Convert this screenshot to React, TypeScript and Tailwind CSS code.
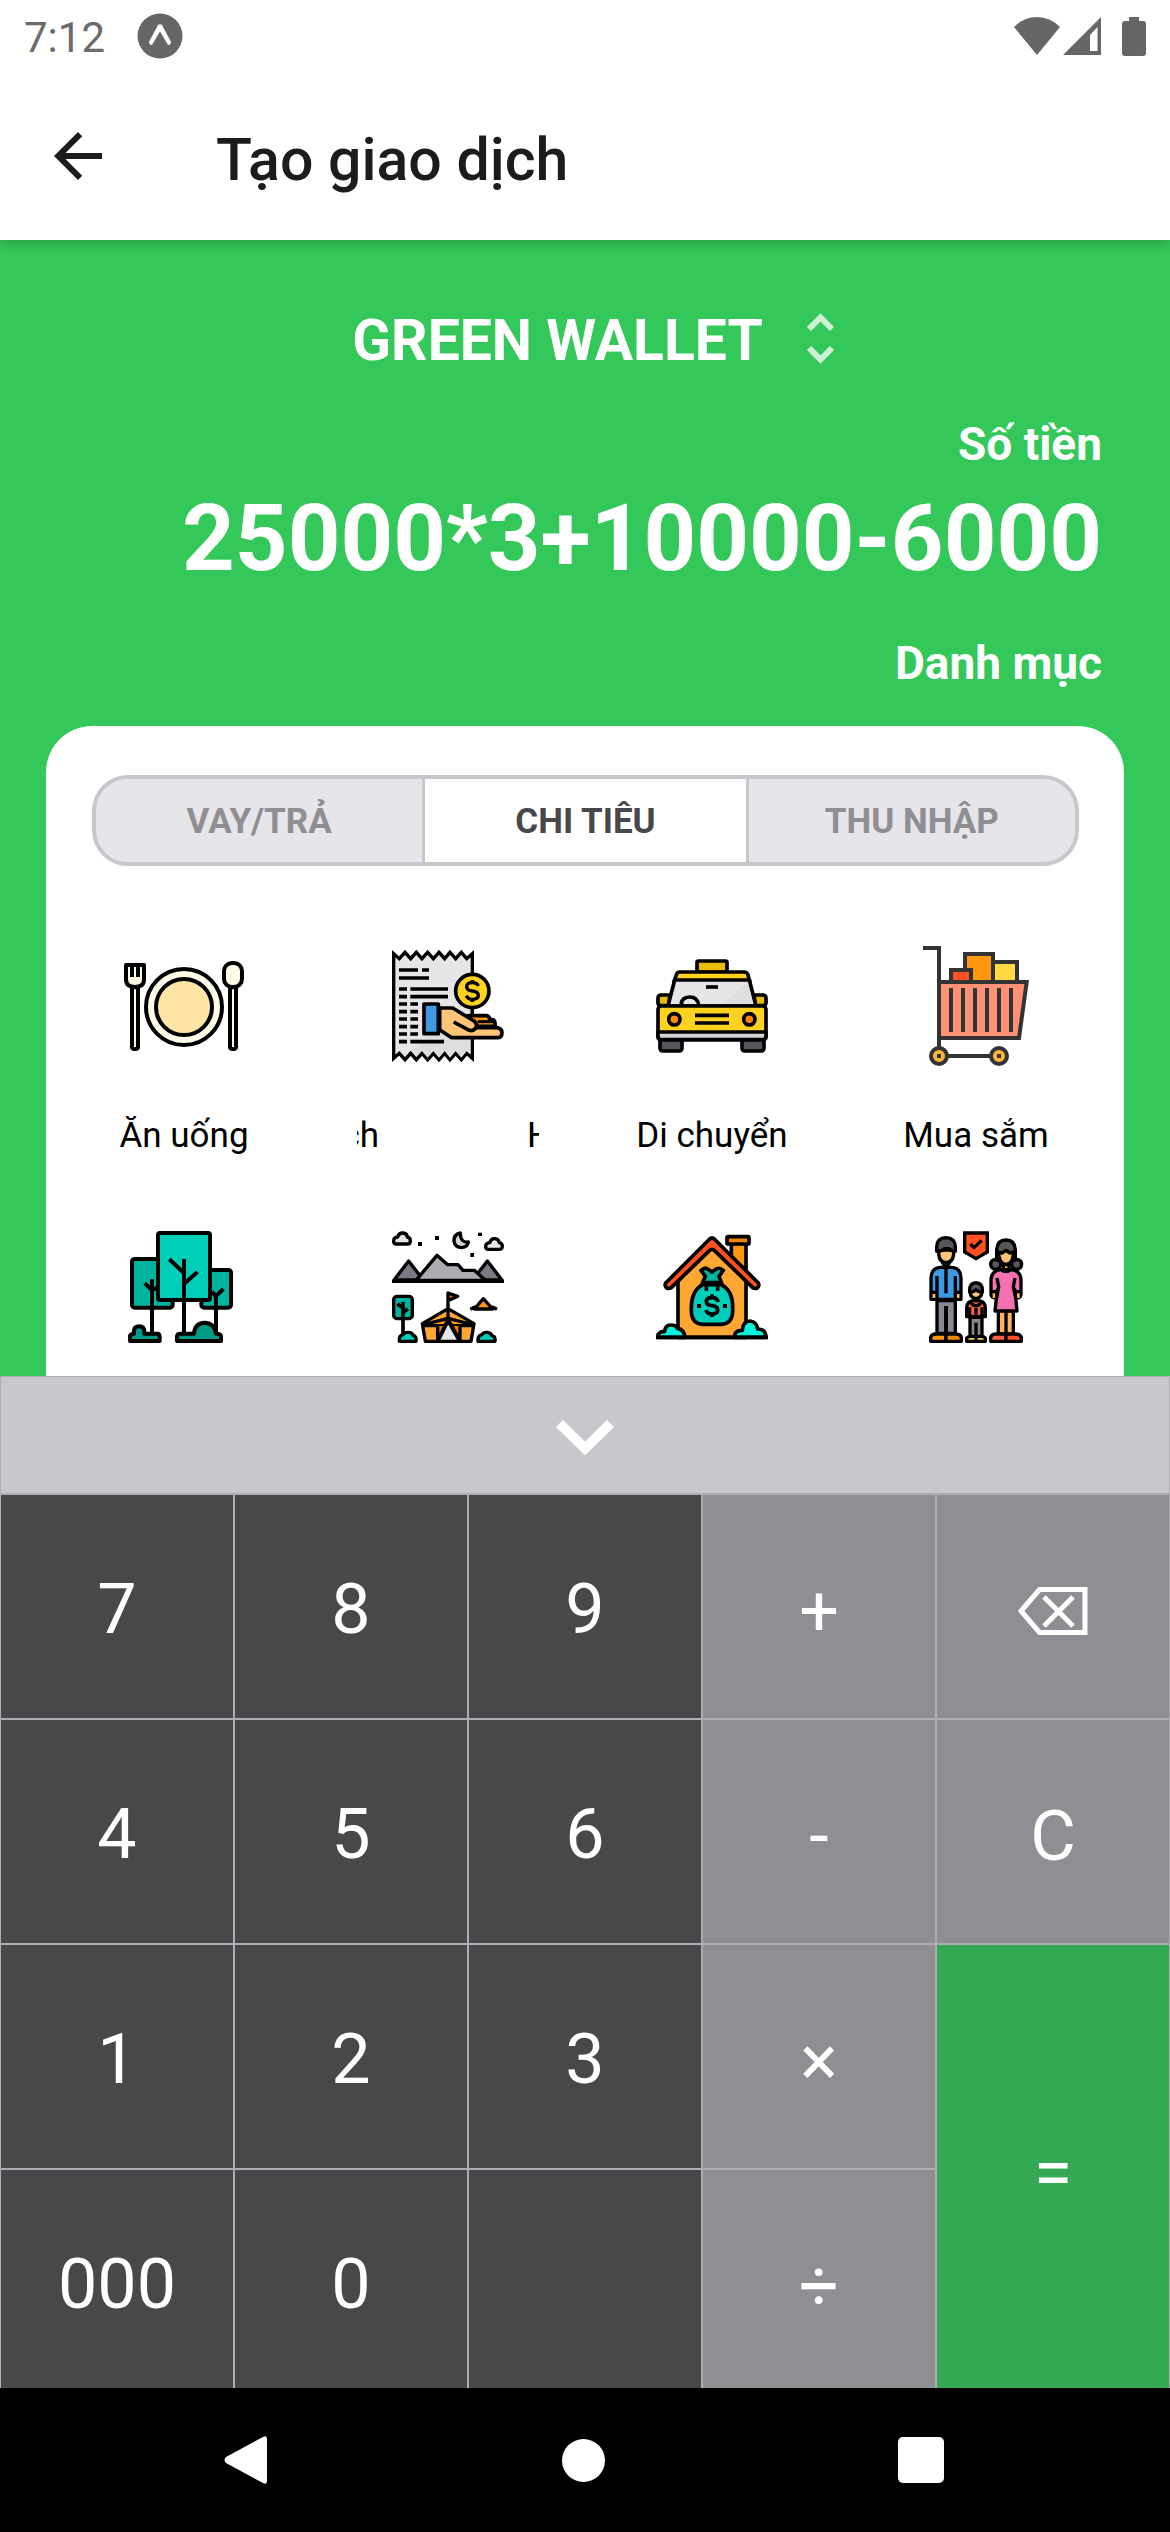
import React from "react";

const outline = {
  stroke: "#000",
  strokeWidth: 12,
  strokeLinejoin: "round" as const,
  strokeLinecap: "butt" as const,
};

function DiningIcon() {
  return (
    <svg viewBox="42 48 360 360" className="size-[120px]" aria-hidden="true">
      <g {...outline}>
        <path d="M66 172V350Q66 357 75 357Q84 357 84 350V172Z" fill="#fffde7" />
        <path d="M48 105H102V148Q102 171 75 171Q48 171 48 148Z" fill="#fffde7" />
        <path d="M66 100V141M84 100V141" fill="none" />
        <path d="M360 172V350Q360 357 369 357Q378 357 378 350V172Z" fill="#fffde7" />
        <rect x="342" y="99" width="54" height="72" rx="24" fill="#fffde7" />
        <circle cx="222" cy="231" r="114" fill="#fffde7" />
        <circle cx="222" cy="231" r="84" fill="#ffe6a7" />
      </g>
    </svg>
  );
}

function BillIcon() {
  return (
    <svg viewBox="144 48 360 360" className="size-[120px]" aria-hidden="true">
      <g {...outline} strokeLinejoin="miter" strokeWidth={10}>
        <path
          d="M161 71L178 86L195 67L212 86L229 67L246 86L263 67L280 86L297 67L314 86L330 67L347 86L364 67L380 86L397 71V385L380 370L364 389L347 370L330 389L314 370L297 389L280 370L263 389L246 370L229 389L212 370L195 389L178 370L161 385Z"
          fill="#e6e6e9"
        />
      </g>
      <path d="M318 260L220 364L229 376L246 363L263 383L280 363L297 383L314 363L330 383L347 363L364 383L380 363L391 372V300Z" fill="#dedee1" />
      <path
        d="M177 120H234M246 120H267M177 144H267M177 177H201M211 177H324M177 200H201M211 200H324M177 222H201M211 222H234M177 245H201M211 245H234M177 267H201M211 267H234M177 290H201M211 290H234M177 312H201M211 312H234M177 335H201M211 335H312"
        stroke="#000"
        strokeWidth="11"
      />
      <path d="M397 230V262" stroke="#000" strokeWidth="10" />
      <g {...outline} strokeWidth={11}>
        <circle cx="397" cy="183" r="50" fill="#ffd21f" />
        <path d="M384 257H441Q449 259 449 269H459Q467 274 465 289H408Z" fill="#ff9811" />
        <path
          d="M299 234H338L402 273Q414 283 408 293H471Q486 296 486 308Q486 323 471 323H335L299 299Z"
          fill="#ffc477"
        />
        <path d="M341 276L388 301Q403 305 410 289" fill="none" />
        <path d="M413 275H465" fill="none" strokeWidth={9} />
        <rect x="252" y="222" width="43" height="89" fill="#3d9ae2" />
      </g>
      <path
        d="M415 168Q411 158 397 158Q380 158 380 170Q380 181 397 183Q415 185 415 196Q415 208 397 208Q383 208 379 197M397 150V160M397 206V216"
        fill="none"
        stroke="#000"
        strokeWidth="10"
      />
    </svg>
  );
}

function TaxiIcon() {
  return (
    <svg viewBox="96 48 360 360" className="size-[120px]" aria-hidden="true">
      <g {...outline} strokeWidth={11}>
        <rect x="231" y="93" width="90" height="34" rx="4" fill="#e8bc00" />
        <path d="M150 195H122Q114 196 114 204V220Q115 227 124 227H146ZM402 195H430Q438 196 438 204V220Q437 227 428 227H406Z" fill="#e8bc00" />
        <rect x="120" y="325" width="66" height="38" rx="8" fill="#57565c" />
        <rect x="366" y="325" width="66" height="38" rx="8" fill="#57565c" />
        <path d="M162 155L170 132Q172 126 180 126H372Q380 126 383 132L390 155Z" fill="#ffd21f" />
        <path d="M164 150H388L408 228H144Z" fill="#e6e6e9" />
        <path d="M382 156L310 222H398L383 156Z" fill="#dedee1" stroke="none" />
        <path d="M183 226Q184 201 209 201Q233 201 236 226" fill="none" />
        <path d="M258 171H294" fill="none" />
        <rect x="114" y="228" width="324" height="101" rx="10" fill="#ffd21f" />
        <path d="M114 306H438V319Q438 329 428 329H124Q114 329 114 319Z" fill="#d5d3da" />
        <path d="M225 256H327M225 279H327" fill="none" />
        <circle cx="163" cy="268" r="17" fill="#ff8a00" />
        <circle cx="388" cy="268" r="17" fill="#ff8a00" />
      </g>
    </svg>
  );
}

function CartIcon() {
  return (
    <svg viewBox="108 48 360 360" className="size-[120px]" aria-hidden="true">
      <g stroke="#333" strokeWidth="12">
        <rect x="255" y="72" width="84" height="84" fill="#ff9811" />
        <rect x="339" y="96" width="72" height="60" fill="#ffda44" />
        <rect x="213" y="120" width="60" height="36" fill="#ff5023" />
        <path d="M177 156H440L417 324H177Z" fill="#ff9176" />
        <path d="M129 54H177V350M213 174V306M249 174V306M285 174V306M321 174V306M357 174V306M393 174V306M200 378H334" fill="none" />
        <circle cx="177" cy="378" r="24" fill="#ffb33e" />
        <circle cx="357" cy="378" r="24" fill="#ffb33e" />
      </g>
      <path d="M171 372h12v12h-12zM351 372h12v12h-12z" fill="#333" />
    </svg>
  );
}

function ParkIcon() {
  return (
    <svg viewBox="42 51 360 360" className="size-[120px]" aria-hidden="true">
      <g {...outline}>
        <rect x="66" y="147" width="122" height="146" rx="8" fill="#00b59f" />
        <rect x="274" y="180" width="89" height="113" rx="8" fill="#00b59f" />
        <path d="M126 208V371M104 220L126 240L146 232M318 252V368M306 246L318 258L340 237" fill="none" />
        <rect x="144" y="69" width="156" height="201" rx="6" fill="#00ceb8" />
        <path d="M222 147V372M178 148L222 189M262 186L222 222" fill="none" />
        <path d="M60 393V377Q62 372 72 371V362Q73 349 88 349Q102 350 103 362V371H144Q149 373 149 382V393Z" fill="#009b87" />
        <path d="M201 393V379Q202 371 210 371H252Q254 339 284 338Q314 339 318 371Q333 371 333 379V393Z" fill="#009b87" />
      </g>
    </svg>
  );
}

function CampIcon() {
  return (
    <svg viewBox="54 51 360 360" className="size-[120px]" aria-hidden="true">
      <g {...outline} strokeWidth={10}>
        <path d="M76 102Q70 100 71 91Q72 82 83 81Q87 68 99 69Q111 70 112 81Q121 83 121 92Q121 102 113 102Z" fill="#e6e6e9" />
        <path d="M353 118Q346 116 347 108Q348 99 359 98Q363 85 375 86Q386 87 388 98Q397 100 397 108Q397 117 389 118Z" fill="#e6e6e9" />
        <path d="M271 69Q251 73 252 94Q255 113 275 113Q293 111 295 96Q271 99 271 69Z" fill="#d5d3da" />
        <path d="M72 210L116 153L160 210Z" fill="#7a7882" />
        <path d="M308 210L352 153L396 210Z" fill="#7a7882" />
        <path d="M138 211L201 136L233 164H264L279 181H313L346 211Z" fill="#acabb1" />
        <path d="M66 214H402" fill="none" />
        <rect x="71" y="259" width="56" height="67" rx="10" fill="#00b59f" />
        <path d="M99 276V374M82 282L99 294M114 297L99 307" fill="none" strokeWidth={11} />
        <path d="M88 394Q86 377 99 374Q103 366 116 367Q127 367 130 377Q140 379 138 394Z" fill="#00ceb8" />
        <path d="M324 394Q322 377 336 374Q340 366 352 367Q363 368 366 377Q377 379 375 394Z" fill="#00ceb8" />
        <path d="M234 295V249L263 259L234 272" fill="#ff5023" />
        <path d="M157 341L234 296L312 341L303 394H166Z" fill="#ffa733" />
        <path d="M157 345L234 325L312 345M158 347H312" fill="#ff9811" />
        <path d="M203 348V392L234 328L270 392V348" fill="#e87f00" />
        <path d="M204 394L234 333L269 394Z" fill="#e6e6e9" />
        <path d="M234 296V332" fill="none" />
        <path d="M313 297L340 266L368 297Z" fill="#ff9811" />
        <path d="M301 298L316 290M366 290L381 298" fill="none" />
      </g>
      <path d="M144 96h12v12h-12zM195 78h12v12h-12zM324 68h12v10h-12zM301 129h11v12h-11z" fill="#000" />
    </svg>
  );
}

function HouseIcon() {
  return (
    <svg viewBox="96 51 360 360" className="size-[120px]" aria-hidden="true">
      <g {...outline} strokeWidth={11}>
        <path d="M334 100H378V195L334 150Z" fill="#ff9811" />
        <rect x="321" y="80" width="66" height="22" rx="4" fill="#ee8700" />
        <path d="M174 204L276 110L378 204V382H174Z" fill="#ffa733" />
        <path d="M269 87Q276 81 283 87L415 219Q419 227 413 233Q406 238 398 233L283 121Q276 116 269 121L154 233Q146 238 139 233Q133 227 137 219Z" fill="#ff5023" />
        <path d="M247 220L256 199L243 181Q256 170 263 177L276 186L288 177Q298 171 310 181L297 199L305 220Z" fill="#00b59f" />
        <path d="M248 224H304Q338 242 338 290V306Q336 341 304 343H248Q216 341 214 306V290Q215 242 248 224Z" fill="#00ceb8" />
        <path d="M246 218H308M259 222V242M293 222V242" fill="none" />
        <path d="M114 382V374Q120 364 134 364Q136 344 154 345Q168 345 172 355Q192 358 195 382Z" fill="#00f5dc" />
        <path d="M345 382V372Q350 360 367 361Q369 333 390 333Q410 335 413 357Q437 357 438 382Z" fill="#00f5dc" />
        <path d="M108 382H444" fill="none" />
        <path d="M294 276Q292 263 276 263Q259 263 259 274Q259 286 276 287Q293 289 293 300Q293 312 276 312Q261 312 258 300M276 253V264M276 311V321" fill="none" />
      </g>
      <path d="M231 282h12v12h-12zM309 282h12v12h-12z" fill="#000" />
    </svg>
  );
}

function FamilyIcon() {
  return (
    <svg viewBox="108 51 360 360" className="size-[120px]" aria-hidden="true">
      <g {...outline} strokeWidth={10}>
        <path d="M254 69H322V126L288 146L254 126Z" fill="#ff5023" strokeLinejoin="miter" />
        <path d="M271 102L282 113L305 91" fill="none" />

        <path d="M171 272H226V370H171Z" fill="#8b8892" />
        <path d="M198 288V372" fill="none" strokeWidth={12} />
        <path d="M153 268V204Q154 173 182 172H214Q242 173 243 204V268Z" fill="#3d9ae2" />
        <path d="M158 252H168V264H158ZM228 252H238V264H228Z" fill="#ffb35a" stroke="none" />
        <path d="M171 198V268M226 198V268M198 174V250M153 247H170M226 247H243" fill="none" />
        <path d="M188 158L198 174L209 158Z" fill="#ffc477" />
        <path d="M176 120V132Q178 157 198 158Q219 157 221 132V120Z" fill="#ffc477" />
        <path d="M170 124V110Q171 84 198 83Q225 84 226 110V124Q214 124 207 116H202L198 119L194 116L188 120Q182 124 170 124Z" fill="#57565c" />
        <path d="M152 394V382Q154 372 168 372H198V394Z" fill="#ff9811" />
        <path d="M198 394V372H228Q242 373 244 382V394Z" fill="#ee8700" />

        <path d="M270 322H306V382H270Z" fill="#8b8892" />
        <path d="M288 338V380" fill="none" />
        <path d="M260 320V292Q262 273 280 272H296Q314 273 316 292V320Z" fill="#ff6243" />
        <path d="M269 292V320M306 292V320M288 294V314M271 276Q288 299 305 276" fill="none" />
        <path d="M270 236V247Q272 264 288 265Q304 264 306 247V236Z" fill="#ffc477" />
        <path d="M269 246V238Q270 219 288 218Q306 219 307 238V246Q296 248 288 239Q280 248 269 246Z" fill="#57565c" />
        <path d="M260 394V384Q264 379 274 379H288V394ZM288 394V379H302Q313 379 316 384V394Z" fill="#ffda44" />

        <path d="M355 302H378V372H355ZM378 302H400V372H378Z" fill="#ffb35a" />
        <circle cx="347" cy="163" r="15" fill="#57565c" />
        <circle cx="410" cy="163" r="15" fill="#57565c" />
        <path d="M350 150V118Q352 90 378 90Q404 90 406 118V150Z" fill="#57565c" />
        <path d="M356 126L366 129L378 121L390 129L400 126Q401 161 378 163Q356 161 356 126Z" fill="#ffc477" />
        <path d="M370 164H387V179H370Z" fill="#ffb35a" />
        <path d="M363 179Q378 190 393 179Q422 182 423 210V254Q421 265 411 263L405 240L411 303H345L352 240L346 263Q335 265 333 254V210Q334 182 363 179Z" fill="#f271ae" />
        <path d="M338 250H346V264H338ZM411 250H419V264H411Z" fill="#ffb35a" stroke="none" />
        <path d="M351 204L356 230L350 264M405 204L400 230L407 264M333 245H352M405 245H423" fill="none" />
        <path d="M332 394V382Q335 372 348 372H378V394Z" fill="#ff6243" />
        <path d="M378 394V372H408Q421 373 424 382V394Z" fill="#ff5023" />
      </g>
    </svg>
  );
}

function StatusBar() {
  return (
    <div className="flex h-[72px] items-center justify-between px-6 text-[#6b6b6b]">
      <div className="flex items-center gap-8">
        <span className="pt-1 text-[42px] leading-[48px]">7:12</span>
        <svg viewBox="0 0 46 46" className="size-[46px]" aria-hidden="true">
          <circle cx="23" cy="23" r="22.5" fill="#666" />
          <path
            d="M21 12Q23 10.500 25 12L34 29Q34 32 31 32L23 18.500L15 32Q12 32 12 29Z"
            fill="#fff"
          />
        </svg>
      </div>
      <div className="flex items-center text-[#666]">
        <svg viewBox="0 0 46 38" className="h-[38px] w-[46px]" fill="currentColor" aria-hidden="true">
          <path d="M0 10Q10 0 23 0Q36 0 46 10L23 38Z" />
        </svg>
        <svg viewBox="0 0 38 38" className="ml-[3px] h-[38px] w-[38px]" fill="currentColor" aria-hidden="true">
          <path fillRule="evenodd" d="M38 0V38H0ZM34.500 10L27 18V34H34.500Z" />
        </svg>
        <svg viewBox="0 0 24 39" className="ml-[21px] h-[39px] w-6" fill="currentColor" aria-hidden="true">
          <path d="M7 0H17V4H21Q24 4 24 7V36Q24 39 21 39H3Q0 39 0 36V7Q0 4 3 4H7Z" />
        </svg>
      </div>
    </div>
  );
}

function Header() {
  return (
    <header className="relative z-10 flex-none bg-white shadow-[0_2px_12px_rgba(0,0,0,0.25)]">
      <StatusBar />
      <div className="flex h-[168px] items-center pt-2">
        <button type="button" aria-label="Quay lại" className="mb-2 ml-[54px] text-[#1c1c1e]">
          <svg viewBox="4 4 16 16" className="size-12" fill="currentColor" aria-hidden="true">
            <path d="M20 11H7.830l5.590-5.590L12 4l-8 8 8 8 1.410-1.410L7.830 13H20v-2z" />
          </svg>
        </button>
        <h1 className="ml-[114px] text-[59px] font-medium leading-[72px] text-[#1c1c1e]">Tạo giao dịch</h1>
      </div>
    </header>
  );
}

const tabs = ["VAY/TRẢ", "CHI TIÊU", "THU NHẬP"];

function Tabs() {
  return (
    <div
      role="tablist"
      className="ml-[46px] mr-[45px] grid h-[91px] grid-cols-3 overflow-hidden rounded-[36px] border-4 border-[#c7c7cc] bg-[#e5e5ea] text-[35px] font-bold text-[#8e8e93]"
    >
      {tabs.map((tab, i) => (
        <button
          key={tab}
          type="button"
          role="tab"
          aria-selected={i === 1}
          className={
            i === 1 ? "border-x-[3px] border-[#c7c7cc] bg-white pt-1 text-[#48484a]" : "pt-1"
          }
        >
          {tab}
        </button>
      ))}
    </div>
  );
}

function ScrollingLabel() {
  return (
    <span className="flex w-[182px] justify-between">
      <span className="flex w-[22px] justify-end overflow-hidden">ch</span>
      <span className="w-[12px] overflow-hidden">H</span>
    </span>
  );
}

const categories: { id: string; icon: React.ReactNode; label: React.ReactNode }[] = [
  { id: "food", icon: <DiningIcon />, label: "Ăn uống" },
  { id: "bill", icon: <BillIcon />, label: <ScrollingLabel /> },
  { id: "move", icon: <TaxiIcon />, label: "Di chuyển" },
  { id: "shop", icon: <CartIcon />, label: "Mua sắm" },
  { id: "park", icon: <ParkIcon />, label: null },
  { id: "camp", icon: <CampIcon />, label: null },
  { id: "home", icon: <HouseIcon />, label: null },
  { id: "family", icon: <FamilyIcon />, label: null },
];

function Categories() {
  return (
    <div className="mt-20 grid grid-cols-4 gap-y-[70px] pl-[6px] pr-4">
      {categories.map((c) => (
        <button key={c.id} type="button" aria-label={c.id} className="flex flex-col items-center">
          {c.icon}
          <span className="mt-[49px] h-[42px] text-[35px] leading-[42px] text-black">{c.label}</span>
        </button>
      ))}
    </div>
  );
}

function Transaction() {
  return (
    <main className="min-h-0 flex-1 overflow-hidden bg-[#34c759] px-[46px] pt-[67px] font-bold text-white">
      <button type="button" className="flex h-[68px] w-full items-center justify-center gap-[30px] pl-[30px]">
        <span className="text-[57px] leading-[68px]">GREEN WALLET</span>
        <svg viewBox="0 0 55 55" className="size-[55px] overflow-visible text-[#cdf1d6]" fill="none" stroke="currentColor" strokeWidth="6" aria-hidden="true">
          <path d="M16 15L27.500 3.500L39 15M16 34L27.500 45.500L39 34" />
        </svg>
      </button>
      <p className="mt-[41px] pr-[22px] text-right text-[46px] leading-[56px]">Số tiền</p>
      <p className="mt-3 pr-[22px] text-right text-[92px] leading-[110px]">25000*3+10000-6000</p>
      <p className="mt-[41px] pr-[22px] text-right text-[46px] leading-[56px]">Danh mục</p>
      <section className="mt-[35px] h-full rounded-t-[46px] bg-white pt-[49px] font-normal">
        <Tabs />
        <Categories />
      </section>
    </main>
  );
}

const BackspaceGlyph = (
  <svg viewBox="0 0 70 48" className="h-12 w-[70px]" fill="none" stroke="currentColor" strokeWidth="5" aria-hidden="true">
    <path d="M3 24L21.500 2.500H67V45.500H21.500Z" />
    <path d="M26 10L55 39M55 10L26 39" />
  </svg>
);

const keys: { id: string; face: React.ReactNode; kind: "digit" | "op" | "equals" }[] = [
  { id: "7", face: "7", kind: "digit" },
  { id: "8", face: "8", kind: "digit" },
  { id: "9", face: "9", kind: "digit" },
  { id: "plus", face: "+", kind: "op" },
  { id: "backspace", face: BackspaceGlyph, kind: "op" },
  { id: "4", face: "4", kind: "digit" },
  { id: "5", face: "5", kind: "digit" },
  { id: "6", face: "6", kind: "digit" },
  { id: "minus", face: "-", kind: "op" },
  { id: "clear", face: "C", kind: "op" },
  { id: "1", face: "1", kind: "digit" },
  { id: "2", face: "2", kind: "digit" },
  { id: "3", face: "3", kind: "digit" },
  { id: "times", face: "×", kind: "op" },
  { id: "equals", face: "=", kind: "equals" },
  { id: "000", face: "000", kind: "digit" },
  { id: "0", face: "0", kind: "digit" },
  { id: "blank", face: "", kind: "digit" },
  { id: "divide", face: "÷", kind: "op" },
];

const keyStyles = {
  digit: "bg-[#48484a] pt-1",
  op: "bg-[#8e8e93] pt-2",
  equals: "row-span-2 bg-[#34a853] pt-2",
};

function Keypad() {
  return (
    <div className="h-[1012px] flex-none overflow-hidden text-[70px] text-white">
      <button
        type="button"
        aria-label="Ẩn bàn phím"
        className="flex h-[118px] w-full items-center justify-center border border-[#aeaeb2] bg-[#c7c7cc] pt-1"
      >
        <svg viewBox="0 0 60 36" className="h-9 w-[60px]" fill="none" stroke="currentColor" strokeWidth="10" aria-hidden="true">
          <path d="M4.500 4.500L30 29.500L55.500 4.500" />
        </svg>
      </button>
      <div className="grid auto-rows-[225px] grid-cols-5">
        {keys.map((k) => (
          <button
            key={k.id}
            type="button"
            aria-label={k.id}
            className={"flex items-center justify-center border border-[#aeaeb2] leading-[82px] " + keyStyles[k.kind]}
          >
            {k.face}
          </button>
        ))}
      </div>
    </div>
  );
}

function NavBar() {
  return (
    <nav className="flex h-36 flex-none items-center justify-between bg-black pl-[223px] pr-[226px] text-white">
      <button type="button" aria-label="Back">
        <svg viewBox="0 0 46 50" className="h-[50px] w-[46px]" fill="currentColor" aria-hidden="true">
          <path d="M3 22L40 2Q44 0 44 4V46Q44 50 40 48L3 28Q0 25 3 22Z" />
        </svg>
      </button>
      <button type="button" aria-label="Home" className="size-[43px] rounded-full bg-white" />
      <button type="button" aria-label="Recents" className="size-[46px] rounded-[5px] bg-white" />
    </nav>
  );
}

export default function App() {
  return (
    <div className="flex h-screen flex-col overflow-hidden bg-white font-['Roboto',sans-serif]">
      <Header />
      <Transaction />
      <Keypad />
      <NavBar />
    </div>
  );
}
